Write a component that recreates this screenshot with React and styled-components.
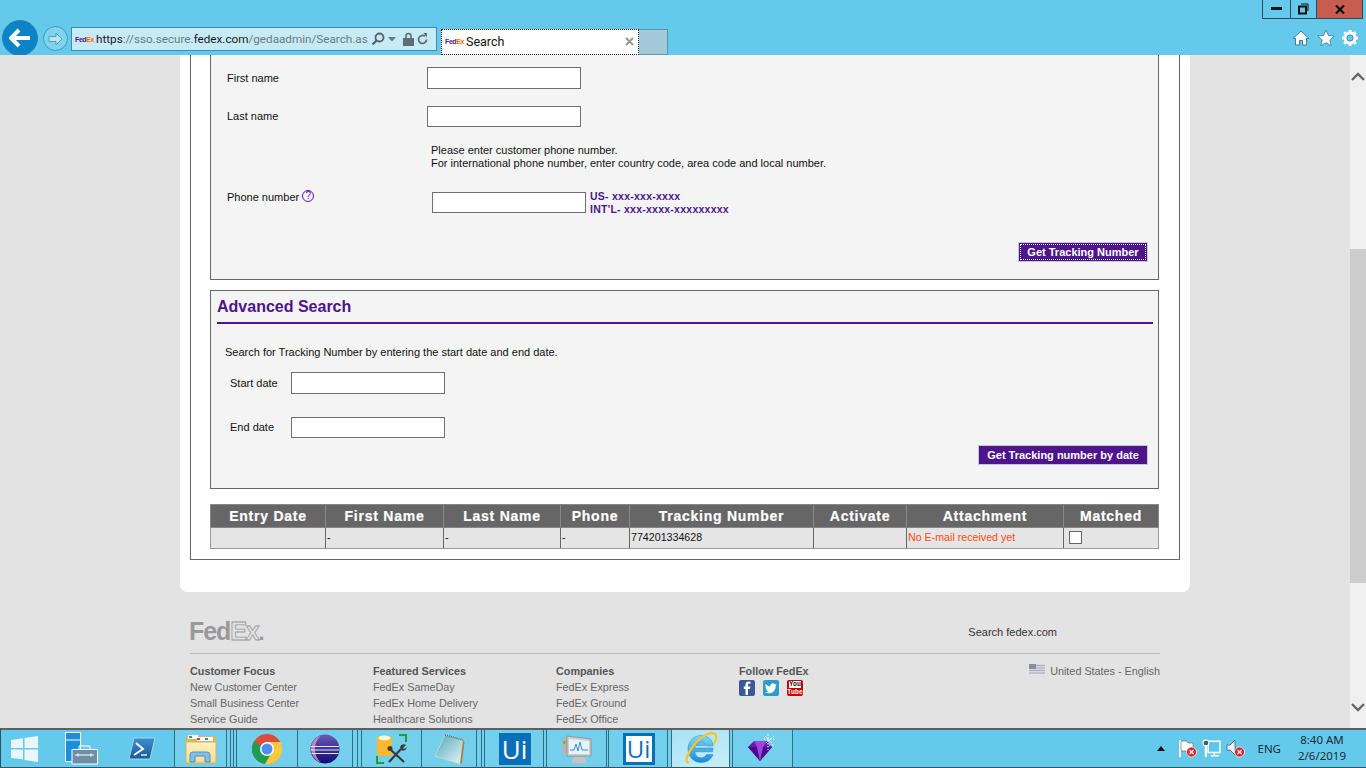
import React from 'react';
import styled, { createGlobalStyle } from 'styled-components';

const Global = createGlobalStyle`
  html, body { margin: 0; padding: 0; height: 100%; overflow: hidden; }
  * { box-sizing: border-box; }
  body { font-family: "Liberation Sans", Arial, sans-serif; font-size: 11px; color: #111; }
`;

const Screen = styled.div`
  width: 1366px;
  height: 768px;
  display: flex;
  flex-direction: column;
  overflow: hidden;
  background: #e3e3e3;
`;

const Glyph = styled.span`
  display: flex;
  flex: none;
  margin-left: ${p => p.$ml || 0}px;
  margin-right: ${p => p.$mr || 0}px;
`;

/* browser chrome */
const Chrome = styled.div`
  height: 55px;
  flex: none;
  background: #65c9ec;
  display: flex;
  flex-direction: column;
`;
const WindowBar = styled.div`
  height: 20px;
  display: flex;
  justify-content: flex-end;
  padding-right: 3px;
`;
const WinBtn = styled.div`
  width: ${p => p.$w}px;
  height: 19px;
  border: 1px solid #2c4a5c;
  border-top: none;
  margin-left: -1px;
  background: ${p => p.$bg || 'transparent'};
  display: flex;
  align-items: center;
  justify-content: center;
`;
const NavBar = styled.div`
  height: 35px;
  display: flex;
  align-items: flex-end;
  padding-left: 2px;
`;
const BackBtn = styled.div`
  width: 36px;
  height: 36px;
  margin-bottom: -1px;
  border-radius: 50%;
  background: #0a84c6;
  border: 1px solid #2a7fb0;
  display: flex;
  align-items: center;
  justify-content: center;
  flex: none;
`;
const ForwardBtn = styled.div`
  width: 25px;
  height: 25px;
  margin: 0 0 4px 5px;
  border-radius: 50%;
  background: #7fd3ee;
  border: 1px solid #3f9dbd;
  display: flex;
  align-items: center;
  justify-content: center;
  flex: none;
`;
const Address = styled.div`
  width: 366px;
  height: 24px;
  margin: 0 0 4px 3px;
  background: #c6ebf7;
  border: 1px solid #3d8fae;
  display: flex;
  align-items: center;
  padding-left: 3px;
  flex: none;
`;
const Favicon = styled.span`
  font: bold 7px "Liberation Sans", sans-serif;
  letter-spacing: -0.4px;
  color: #4d148c;
  width: 21px;
  flex: none;
  b { color: #ff6600; font-weight: bold; }
`;
const Url = styled.span`
  font: 11.7px Roboto, "Noto Sans", sans-serif;
  color: #6a7a80;
  width: 272px;
  white-space: nowrap;
  flex: none;
  b { color: #1a1a1a; font-weight: normal; }
`;
const AddrIcons = styled.div`
  display: flex;
  align-items: center;
  gap: 3px;
  margin-left: 3px;
`;
const Tab = styled.div`
  width: 198px;
  height: 26px;
  margin-left: 4px;
  background: #fff;
  border: 1px dotted #222;
  display: flex;
  align-items: center;
  padding: 0 4px 2px 3px;
  flex: none;
`;
const TabTitle = styled.span`
  font: 12.5px Roboto, "Noto Sans", sans-serif;
  color: #111;
  flex: 1;
`;
const NewTab = styled.div`
  width: 29px;
  height: 26px;
  background: #a3c8d8;
  border: 1px solid #4f9ab6;
  border-left: none;
  flex: none;
`;
const ToolIcons = styled.div`
  margin-left: auto;
  display: flex;
  align-items: center;
  gap: 6.5px;
  padding: 0 7px 8px 0;
`;

/* middle */
const Middle = styled.div`
  flex: 1;
  min-height: 0;
  display: flex;
`;
const Viewport = styled.div`
  flex: 1;
  overflow: hidden;
  background: #e3e3e3;
`;
const Card = styled.div`
  width: 1010px;
  margin-left: 180px;
  padding: 0 10px 32px;
  background: #fff;
  border-radius: 0 0 8px 8px;
`;
const Outer = styled.div`
  border: 1px solid #666;
  border-top: none;
  padding: 0 20px 10px 19px;
`;
const Panel = styled.div`
  background: #f4f4f4;
  border: 1px solid #666;
  border-top: ${p => (p.$open ? 'none' : '1px solid #666')};
  margin-top: ${p => p.$mt || 0}px;
  height: ${p => p.$h}px;
  padding-top: ${p => p.$pt || 0}px;
`;
const Row = styled.div`
  display: flex;
  align-items: ${p => p.$top ? 'flex-start' : 'center'};
  margin-top: ${p => p.$mt || 0}px;
  padding-left: ${p => p.$pl || 0}px;
`;
const Label = styled.label`
  width: ${p => p.$w}px;
  flex: none;
  font-size: 11px;
  color: #111;
  margin-top: ${p => p.$mt || 0}px;
  padding-bottom: ${p => p.$pb || 0}px;
`;
const HelpMark = styled.span`
  display: inline-flex;
  width: 12px;
  height: 12px;
  margin-left: 3px;
  border: 1px solid #6a0dad;
  border-radius: 50%;
  color: #6a0dad;
  font-size: 10px;
  line-height: 10px;
  justify-content: center;
  position: relative;
  top: -2px;
`;
const Field = styled.input`
  width: 154px;
  height: ${p => p.$h || 21}px;
  background: #fff;
  border: 1px solid #707070;
  border-radius: 0;
  padding: 0;
  flex: none;
`;
const Help = styled.p`
  margin: 17px 0 0 220px;
  font-size: 11px;
  line-height: 13px;
  color: #111;
`;
const Formats = styled.div`
  margin: -2px 0 0 4px;
  font-size: 10.5px;
  font-weight: bold;
  line-height: 13px;
  letter-spacing: 0.25px;
  color: #4d148c;
`;
const ButtonRow = styled.div`
  display: flex;
  justify-content: flex-end;
  padding-right: 10px;
  margin-top: ${p => p.$mt}px;
`;
const PurpleBtn = styled.button`
  width: ${p => p.$w}px;
  height: ${p => p.$h}px;
  background: #4d148c;
  color: #fff;
  font: bold 11px "Liberation Sans", sans-serif;
  border: 1px solid #c9c6d2;
  outline: ${p => p.$focus ? '1px dotted #fff' : 'none'};
  outline-offset: -3px;
  padding: 0;
  flex: none;
`;
const Heading = styled.h2`
  margin: 0 5px 0 6px;
  height: 33px;
  padding-top: 7px;
  border-bottom: 2px solid #4d148c;
  color: #4d148c;
  font-size: 16px;
  line-height: 18px;
  font-weight: bold;
`;
const Intro = styled.p`
  margin: 22px 0 0 14px;
  font-size: 11px;
  line-height: 13px;
`;

const Results = styled.table`
  width: 948px;
  margin-top: 15px;
  border-collapse: collapse;
  table-layout: fixed;
`;
const Th = styled.th`
  height: 23px;
  padding: 0;
  background: #666;
  color: #fff;
  border: 1px solid #888;
  font: bold 14px "Liberation Sans", sans-serif;
  letter-spacing: 0.75px;
  -webkit-text-stroke: 0.2px #fff;
  text-align: center;
`;
const Td = styled.td`
  height: 21px;
  padding: 0 0 2px 1px;
  background: #e5e5e5;
  border: 1px solid #666;
  border-bottom-color: #999;
  font-size: 10.67px;
  color: ${p => p.$warn ? '#ff4a0d' : '#111'};
  &:first-child { border-left-color: #999; }
  &:last-child { border-right-color: #999; }
`;
const Check = styled.span`
  display: block;
  width: 13px;
  height: 13px;
  margin: 1px 0 0 4px;
  background: #fff;
  border: 1px solid #666;
`;

/* footer */
const Footer = styled.div`
  width: 970px;
  margin-left: 190px;
  padding-top: 27px;
`;
const FooterTop = styled.div`
  height: 35px;
  display: flex;
  justify-content: space-between;
  border-bottom: 1px solid #bbb;
  padding-right: 103px;
`;
const Logo = styled.div`
  font: bold 25px/25px "Liberation Sans", sans-serif;
  letter-spacing: -1.1px;
  margin-left: -1px;
  color: #999;
  height: 25px;
  span {
    color: #e3e3e3;
    -webkit-text-stroke: 0.8px #999;
  }
  i { font-style: normal; font-size: 22px; letter-spacing: 0; }
`;
const SearchLink = styled.div`
  font-size: 11px;
  color: #333;
  line-height: 26px;
`;
const FooterCols = styled.div`
  display: flex;
  padding-top: 9px;
`;
const Col = styled.div`
  width: 183px;
  flex: none;
  font-size: 10.8px;
  line-height: 16px;
  color: #666;
  strong { display: block; color: #555; }
`;
const Socials = styled.div`
  display: flex;
  gap: 8px;
  margin-top: 1px;
`;
const Locale = styled.div`
  margin-left: auto;
  display: flex;
  align-items: flex-start;
  gap: 5px;
  font-size: 10.8px;
  line-height: 16px;
  color: #666;
  white-space: nowrap;
`;

/* scrollbar */
const Scroll = styled.div`
  width: 16px;
  flex: none;
  background: #f0f0f0;
  display: flex;
  flex-direction: column;
`;
const ScrollEnd = styled.div`
  height: 42px;
  margin-top: ${p => p.$bottom ? 'auto' : '0'};
  display: flex;
  align-items: center;
  justify-content: center;
`;
const Thumb = styled.div`
  height: 334px;
  margin-top: 152px;
  background: #cdcdcd;
`;

/* taskbar */
const Taskbar = styled.div`
  height: 40px;
  flex: none;
  background: #65c9ec;
  border-top: 2px solid #5f5f5f;
  border-bottom: 1px solid #33525f;
  border-left: 1px solid #33525f;
  display: flex;
`;
const StartGroup = styled.div`
  width: 174px;
  flex: none;
  display: flex;
  align-items: center;
  border-right: 1px solid #2c6f88;
`;
const Task = styled.div`
  width: ${p => p.$w}px;
  flex: none;
  background: ${p => p.$active ? 'linear-gradient(160deg,#a8e2f4,#c8eef8)' : '#74cfec'};
  border-right: 1px solid #2c6f88;
  display: flex;
  align-items: center;
  justify-content: center;
`;
const UiSolid = styled.div`
  width: 32px;
  height: 32px;
  margin-left: 1px;
  background: #0b6fb8;
  color: #fff;
  font: 26px/32px "Open Sans", "Liberation Sans", sans-serif;
  text-align: center;
`;
const UiFramed = styled(UiSolid)`
  background: #fff;
  color: #0b6fb8;
  border: 3px solid #0b6fb8;
  line-height: 26px;
  font-size: 24px;
`;
const Tray = styled.div`
  margin-left: auto;
  display: flex;
  align-items: center;
  color: #1c2b33;
`;
const Eng = styled.span`
  font: 11.5px "Noto Sans", "Open Sans", sans-serif;
  margin: 0 10px 0 12px;
`;
const Clock = styled.div`
  width: 62px;
  margin: -2px 13px 0 0;
  text-align: center;
  font: 11.5px/16px "Noto Sans", "Open Sans", sans-serif;
`;

const Chevron = ({ up }) => (
  <svg width="14" height="9" viewBox="0 0 14 9">
    <path d={up ? 'M1 8l6-6 6 6' : 'M1 1l6 6 6-6'} fill="none" stroke="#666" strokeWidth="2.4" />
  </svg>
);

const Home = () => (
  <svg width="18" height="18" viewBox="0 0 18 18">
    <path d="M9 2L1 9.5h2.5V16h4v-4.5h3V16h4V9.5H17z" fill="#fff" stroke="#3e7f98" strokeWidth="1" />
  </svg>
);
const Star = () => (
  <svg width="18" height="18" viewBox="0 0 18 18">
    <path d="M9 1l2.4 5.4 5.8.6-4.4 3.9 1.3 5.7L9 13.7l-5.1 2.9 1.3-5.7L.8 7l5.8-.6z" fill="#fff" stroke="#3e7f98" strokeWidth=".8" />
  </svg>
);
const Gear = () => (
  <svg width="18" height="18" viewBox="0 0 18 18">
    <circle cx="9" cy="9" r="5" fill="none" stroke="#fff" strokeWidth="3" />
    <path d="M9 1v3M9 14v3M1 9h3M14 9h3M3.3 3.3l2 2M12.7 12.7l2 2M14.7 3.3l-2 2M5.3 12.7l-2 2" stroke="#fff" strokeWidth="3" />
    <circle cx="9" cy="9" r="3" fill="#65c9ec" stroke="#3e7f98" strokeWidth=".7" />
  </svg>
);

const WindowsLogo = () => (
  <svg width="28" height="28" viewBox="0 0 28 28">
    <path d="M0 5l12-1.7V13H0zM13.500 3L27 1v12H13.500zM0 14.500h12v10L0 22.800zM13.500 14.500H27V27l-13.500-2z" fill="#e9f6fb" />
  </svg>
);
const ServerManager = () => (
  <svg width="33" height="33" viewBox="0 0 33 33">
    <path d="M.5.5h15v29H.5z" fill="#1c8fdc" stroke="#fff" />
    <path d="M.5 8h15" stroke="#fff" />
    <path d="M7 17.500h25.500v14.500H7z" fill="#6f8ea3" stroke="#fff" />
    <path d="M14 17v-3h11v3" fill="none" stroke="#fff" />
    <path d="M10 23h19" stroke="#fff" />
    <path d="M13 21.500v3M26 21.500v3" stroke="#fff" />
  </svg>
);
const PowerShell = () => (
  <svg width="28" height="24" viewBox="0 0 28 24">
    <defs>
      <linearGradient id="ps" x1="0" y1="0" x2="0" y2="1">
        <stop offset="0" stopColor="#3f8fd0" />
        <stop offset="1" stopColor="#175a9c" />
      </linearGradient>
    </defs>
    <path d="M6 1h21l-5 21H1z" fill="url(#ps)" stroke="#a8d4ea" />
    <path d="M8 6l7 6-9 6" fill="none" stroke="#fff" strokeWidth="2" />
    <path d="M13 18h6" stroke="#cfe6f4" strokeWidth="1.600" />
  </svg>
);
const Explorer = () => (
  <svg width="32" height="30" viewBox="0 0 32 30">
    <defs>
      <linearGradient id="fold" x1="0" y1="0" x2="0" y2="1">
        <stop offset="0" stopColor="#fff3bf" />
        <stop offset="1" stopColor="#f3d98a" />
      </linearGradient>
    </defs>
    <path d="M1 2h30v26H1z" fill="#d9b75e" />
    <path d="M3 1h10v4H3z" fill="#fff" />
    <path d="M4 2h3v2H4z" fill="#2ba84a" />
    <path d="M12 3h16v4H12z" fill="#fff" />
    <path d="M12 4h3v2h-3z" fill="#d8402c" />
    <path d="M20 4h3v2h-3z" fill="#2f80d0" />
    <path d="M1 8h30v21H1z" fill="url(#fold)" stroke="#d2b264" />
    <path d="M5 28v-7a3 3 0 0 1 3-3h14a3 3 0 0 1 3 3v7h-5v-6h-10v6z" fill="#7dc0e8" stroke="#4a94c4" />
  </svg>
);
const ChromeIcon = () => (
  <svg width="30" height="30" viewBox="0 0 30 30">
    <circle cx="15" cy="15" r="15" fill="#dd4b3e" />
    <path d="M15 15L2 7.500A15 15 0 0 0 15 30l7-11z" fill="#1d9d55" />
    <path d="M15 8h13.500A15 15 0 0 1 13 29.900L21 16z" fill="#f8c93e" />
    <circle cx="15" cy="15" r="7" fill="#fff" />
    <circle cx="15" cy="15" r="5.500" fill="#4d8cf0" />
  </svg>
);
const Eclipse = () => (
  <svg width="30" height="30" viewBox="0 0 30 30">
    <defs>
      <linearGradient id="ecl" x1="0" y1="0" x2="0" y2="1">
        <stop offset="0" stopColor="#6a5ab8" />
        <stop offset="1" stopColor="#0d0d6e" />
      </linearGradient>
    </defs>
    <circle cx="15" cy="15" r="14.500" fill="url(#ecl)" />
    <path d="M1 15A14 14 0 0 1 11 1.500 18 18 0 0 0 11 28.500 14 14 0 0 1 1 15z" fill="#e9a5d6" opacity=".7" />
    <path d="M1 12.500h28M.8 16h28.400M1.500 19.500h27" stroke="#e4e4f6" strokeWidth="1.100" />
  </svg>
);
const DbTool = () => (
  <svg width="32" height="32" viewBox="0 0 32 32">
    <path d="M1 5c0-3 15-3 15 0v16c0 3-15 3-15 0z" fill="#fbb72e" />
    <ellipse cx="8.500" cy="5" rx="6" ry="2.500" fill="#fff6dc" />
    <path d="M23 2h7v7M8 30H1v-7" fill="none" stroke="#2d9a3a" strokeWidth="2" />
    <path d="M13 29L25 16M15 17l13 12" stroke="#3a3a3a" strokeWidth="2.200" />
    <path d="M24 14a4 4 0 0 1 6-2l-3 3 1 1 3-2a4 4 0 0 1-6 3z" fill="#3a3a3a" />
    <circle cx="14" cy="15.500" r="2.500" fill="#3a3a3a" />
  </svg>
);
const Notepad = () => (
  <svg width="32" height="32" viewBox="0 0 32 32">
    <defs>
      <linearGradient id="note" x1="0" y1="0" x2="1" y2="1">
        <stop offset="0" stopColor="#4fa8bc" />
        <stop offset="1" stopColor="#e6f5f5" />
      </linearGradient>
    </defs>
    <path d="M12 2l18 5-3 24-25-8z" fill="url(#note)" stroke="#cfd8d8" strokeWidth=".8" />
    <path d="M27 31l3-24 1.500 2-2.500 21z" fill="#a88448" />
    <path d="M12 2l18 5" stroke="#556" strokeWidth="1.600" strokeDasharray="1 1" />
  </svg>
);
const PerfMon = () => (
  <svg width="32" height="32" viewBox="0 0 32 32">
    <path d="M1 6l5-2v16l-5 2z" fill="#b5b5b5" />
    <path d="M2.500 8h2v3h-2z" fill="#59b548" />
    <path d="M6 3l24 3v17H6z" fill="#cfcfcf" stroke="#8a8a8a" strokeWidth=".8" />
    <path d="M8 6l20 2v13H8z" fill="#e6f3fa" />
    <path d="M9 17h4l2-6 2 7 2-9 2 8h6" fill="none" stroke="#3d8ccc" strokeWidth="1" />
    <path d="M13 24h10l3 5c-4 2-12 2-16 0z" fill="#c4c4c4" />
  </svg>
);
const IeIcon = () => (
  <svg width="34" height="34" viewBox="0 0 34 34">
    <defs>
      <linearGradient id="ieb" x1="0" y1="0" x2="0" y2="1">
        <stop offset="0" stopColor="#7fd8f6" />
        <stop offset="1" stopColor="#1a8bd8" />
      </linearGradient>
    </defs>
    <path d="M28 16H11c0-4 2.500-7 6-7s6 3 6 5h6C29 8 24 3.500 17 3.500 9.500 3.500 4 9.500 4 17s5.500 13.500 13 13.500c6 0 10.500-3 12-8h-6.500c-1 2-3 3.300-5.500 3.300-3.500 0-6-3-6-6h17.500c.4-1.500.4-2.500.5-3.800zM12 13.500c.5-2 2.500-3.500 5-3.500s4.500 1.500 5 3.500z" fill="url(#ieb)" stroke="#2b86c5" strokeWidth=".5" fillRule="evenodd" />
    <path d="M5 30C0 32 3 22 10 13S27 -1 31 2c2 1.500 1 6-1 10" fill="none" stroke="#f4c62c" strokeWidth="2.300" />
  </svg>
);
const Gem = () => (
  <svg width="32" height="32" viewBox="0 0 32 32">
    <path d="M1 14l6-6h13l5 6-12 14z" fill="#6a1cb0" />
    <path d="M1 14h24L13 28z" fill="#4b0c8c" />
    <path d="M7 8l3 6 3 14 3-14 4-6z" fill="#a044e0" />
    <path d="M21 1v16M17 6h12M18 3l7 7M19 10l8-7M22 12h6" stroke="#fff" strokeWidth="1" strokeDasharray="1.500 1.500" />
  </svg>
);

const ErrBadge = () => (
  <g>
    <circle cx="13.500" cy="13" r="5" fill="#d9252b" stroke="#fff" strokeWidth=".7" />
    <path d="M11.500 11l4 4M15.500 11l-4 4" stroke="#fff" strokeWidth="1.300" />
  </g>
);

const Flag = () => (
  <svg width="19" height="19" viewBox="0 0 19 19">
    <path d="M2 1v17" stroke="#fff" strokeWidth="2" />
    <path d="M3 2h6l1 2h5v8H3z" fill="#fff" stroke="#46606c" strokeWidth=".6" />
    <ErrBadge />
  </svg>
);
const Network = () => (
  <svg width="19" height="19" viewBox="0 0 17 17">
    <path d="M5.500 2h10.500v10H5.500z" fill="#5fc6ea" stroke="#fff" strokeWidth="1.300" />
    <path d="M8 15h7M11 12v3" stroke="#fff" strokeWidth="1.300" />
    <rect x="1" y="1" width="5" height="5" rx="2" fill="#46606c" stroke="#fff" />
    <path d="M3.500 6v10" stroke="#fff" strokeWidth="2" />
  </svg>
);
const Speaker = () => (
  <svg width="19" height="19" viewBox="0 0 19 19">
    <path d="M1 6h3l5-5v15l-5-5H1z" fill="#e8f4f8" stroke="#46606c" strokeWidth=".8" />
    <ErrBadge />
  </svg>
);

const Fb = () => (
  <svg width="16" height="16" viewBox="0 0 16 16">
    <rect width="16" height="16" rx="2" fill="#3b5998" />
    <path d="M9 15V9h2l.4-2.500H9V5c0-.8.300-1.200 1.200-1.200h1.300V1.500H9.800C7.700 1.500 6.500 2.700 6.500 4.800v1.700H4.800V9h1.700v6z" fill="#fff" />
  </svg>
);
const Tw = () => (
  <svg width="16" height="16" viewBox="0 0 16 16">
    <rect width="16" height="16" rx="2" fill="#2a9ccd" />
    <path d="M13.500 4.500c-.5.200-1 .4-1.500.4.500-.3 1-.8 1.100-1.300-.5.300-1 .5-1.600.6a2.500 2.500 0 0 0-4.300 2.300C5.600 6.400 3.900 5.500 2.700 4c-.7 1.200-.3 2.600.8 3.300-.4 0-.8-.100-1.100-.3 0 1.200.8 2.200 2 2.500-.4.100-.8.100-1.100 0 .3 1 1.300 1.700 2.300 1.700-1 .8-2.300 1.200-3.600 1 4.500 2.700 11-.1 10.600-6.300.5-.4.900-.8 1-1.400z" fill="#fff" />
  </svg>
);
const YtBadge = styled.div`
  width: 16px;
  height: 16px;
  border-radius: 2px;
  background: #c00;
  color: #fff;
  font: bold 6.500px/7px "Liberation Mono", monospace;
  text-align: center;
  padding-top: 1px;
  span { display: block; background: #fff; color: #111; margin: 0 2px 1px; }
`;
const FlagUs = styled.svg`
  width: 16px;
  height: 10px;
  margin-top: 1px;
  flex: none;
`;

const columns = [
  ['Entry Date', 115], ['First Name', 118], ['Last Name', 117], ['Phone', 69],
  ['Tracking Number', 184], ['Activate', 93], ['Attachment', 157], ['Matched', 95],
];

const footerCols = [
  ['Customer Focus', 'New Customer Center', 'Small Business Center', 'Service Guide'],
  ['Featured Services', 'FedEx SameDay', 'FedEx Home Delivery', 'Healthcare Solutions'],
  ['Companies', 'FedEx Express', 'FedEx Ground', 'FedEx Office'],
];

export default function App() {
  return (
    <Screen>
      <Global />
      <Chrome>
        <WindowBar>
          <WinBtn $w={29}>
            <svg width="11" height="4"><rect width="11" height="3" fill="#111" /></svg>
          </WinBtn>
          <WinBtn $w={27}>
            <svg width="11" height="12" viewBox="0 0 11 12">
              <path d="M3 1h7v7" fill="none" stroke="#111" />
              <rect x="1" y="3.500" width="7" height="7" fill="none" stroke="#111" strokeWidth="2" />
            </svg>
          </WinBtn>
          <WinBtn $w={47} $bg="#c75c50">
            <svg width="10" height="9" viewBox="0 0 10 9">
              <path d="M1 .5l8 8M9 .5l-8 8" stroke="#111" strokeWidth="2.200" />
            </svg>
          </WinBtn>
        </WindowBar>
        <NavBar>
          <BackBtn>
            <svg width="22" height="20" viewBox="0 0 22 20">
              <path d="M10 2L2 10l8 8M2 10h19" fill="none" stroke="#fff" strokeWidth="4" />
            </svg>
          </BackBtn>
          <ForwardBtn>
            <svg width="15" height="14" viewBox="0 0 15 14">
              <path d="M8 1l6 6-6 6V9.500H1v-5h7z" fill="#b8e4f2" stroke="#5b9db6" />
            </svg>
          </ForwardBtn>
          <Address>
            <Favicon>Fed<b>Ex</b></Favicon>
            <Url><b>https</b>://sso.secure.<b>fedex.com</b>/gedaadmin/Search.as</Url>
            <AddrIcons>
              <svg width="14" height="14" viewBox="0 0 14 14">
                <circle cx="8.500" cy="5.500" r="4" fill="none" stroke="#50626a" strokeWidth="1.800" />
                <path d="M5.500 8.500L1.500 12.500" stroke="#50626a" strokeWidth="2.200" />
              </svg>
              <svg width="8" height="5" viewBox="0 0 8 5"><path d="M0 0h8L4 4.500z" fill="#6a7a80" /></svg>
              <Glyph $ml={4}>
                <svg width="11" height="14" viewBox="0 0 11 14">
                  <path d="M3 6V4a2.500 2.500 0 0 1 5 0v2" fill="none" stroke="#5e6d74" strokeWidth="1.600" />
                  <rect y="6" width="11" height="8" fill="#5e6d74" />
                </svg>
              </Glyph>
              <svg width="11" height="14" viewBox="0 0 11 14">
                <path d="M9.500 7.500a4 4 0 1 1-1.500-3.200" fill="none" stroke="#5e6d74" strokeWidth="1.800" />
                <path d="M6.500 1L10 1v4.500z" fill="#5e6d74" />
              </svg>
            </AddrIcons>
          </Address>
          <Tab>
            <Favicon>Fed<b>Ex</b></Favicon>
            <TabTitle>Search</TabTitle>
            <svg width="9" height="9" viewBox="0 0 9 9">
              <path d="M1 1l7 7M8 1L1 8" stroke="#999" strokeWidth="2" />
            </svg>
          </Tab>
          <NewTab />
          <ToolIcons>
            <Home />
            <Star />
            <Gear />
          </ToolIcons>
        </NavBar>
      </Chrome>

      <Middle>
        <Viewport>
          <Card>
            <Outer>
              <Panel $open $h={225} $pt={12}>
                <Row $pl={16}>
                  <Label $w={200}>First name</Label>
                  <Field $h={22} />
                </Row>
                <Row $pl={16} $mt={17}>
                  <Label $w={200} $pb={2}>Last name</Label>
                  <Field />
                </Row>
                <Help>
                  Please enter customer phone number.<br />
                  For international phone number, enter country code, area code and local number.
                </Help>
                <Row $pl={16} $mt={22} $top>
                  <Label $w={205} $mt={-1}>Phone number<HelpMark>?</HelpMark></Label>
                  <Field />
                  <Formats>US- xxx-xxx-xxxx<br />INT'L- xxx-xxxx-xxxxxxxxx</Formats>
                </Row>
                <ButtonRow $mt={26}>
                  <PurpleBtn $w={130} $h={20} $focus>Get Tracking Number</PurpleBtn>
                </ButtonRow>
              </Panel>

              <Panel $mt={10} $h={199}>
                <Heading>Advanced Search</Heading>
                <Intro>Search for Tracking Number by entering the start date and end date.</Intro>
                <Row $pl={19} $mt={13}>
                  <Label $w={61}>Start date</Label>
                  <Field $h={22} />
                </Row>
                <Row $pl={19} $mt={23}>
                  <Label $w={61} $pb={2}>End date</Label>
                  <Field />
                </Row>
                <ButtonRow $mt={7}>
                  <PurpleBtn $w={170} $h={20}>Get Tracking number by date</PurpleBtn>
                </ButtonRow>
              </Panel>

              <Results>
                <colgroup>
                  {columns.map(([name, w]) => <col key={name} width={w} />)}
                </colgroup>
                <thead>
                  <tr>{columns.map(([name]) => <Th key={name}>{name}</Th>)}</tr>
                </thead>
                <tbody>
                  <tr>
                    <Td />
                    <Td>-</Td>
                    <Td>-</Td>
                    <Td>-</Td>
                    <Td>774201334628</Td>
                    <Td />
                    <Td $warn>No E-mail received yet</Td>
                    <Td><Check /></Td>
                  </tr>
                </tbody>
              </Results>
            </Outer>
          </Card>

          <Footer>
            <FooterTop>
              <Logo>Fed<span>Ex</span><i>.</i></Logo>
              <SearchLink>Search fedex.com</SearchLink>
            </FooterTop>
            <FooterCols>
              {footerCols.map(col => (
                <Col key={col[0]}>
                  <strong>{col[0]}</strong>
                  {col.slice(1).map(item => <div key={item}>{item}</div>)}
                </Col>
              ))}
              <Col>
                <strong>Follow FedEx</strong>
                <Socials>
                  <Fb />
                  <Tw />
                  <YtBadge><span>You</span>Tube</YtBadge>
                </Socials>
              </Col>
              <Locale>
                <FlagUs viewBox="0 0 16 10">
                  <rect width="16" height="10" fill="#d8d8e0" />
                  <path d="M0 1.500h16M0 4h16M0 6.500h16M0 9h16" stroke="#a9a9b8" />
                  <rect width="7" height="5" fill="#8a8aa8" />
                </FlagUs>
                United States - English
              </Locale>
            </FooterCols>
          </Footer>
        </Viewport>
        <Scroll>
          <ScrollEnd><Chevron up /></ScrollEnd>
          <Thumb />
          <ScrollEnd $bottom><Chevron /></ScrollEnd>
        </Scroll>
      </Middle>

      <Taskbar>
        <StartGroup>
          <Glyph $ml={10}><WindowsLogo /></Glyph>
          <Glyph $ml={26}><ServerManager /></Glyph>
          <Glyph $ml={30}><PowerShell /></Glyph>
        </StartGroup>
        <Task $w={52}><Explorer /></Task>
        <Task $w={4} />
        <Task $w={3} />
        <Task $w={3} />
        <Task $w={61}><ChromeIcon /></Task>
        <Task $w={55}><Eclipse /></Task>
        <Task $w={5} />
        <Task $w={4} />
        <Task $w={60}><DbTool /></Task>
        <Task $w={55}><Notepad /></Task>
        <Task $w={5} />
        <Task $w={3} />
        <Task $w={59}><UiSolid>Ui</UiSolid></Task>
        <Task $w={3} />
        <Task $w={60}><PerfMon /></Task>
        <Task $w={2} />
        <Task $w={59}><UiFramed>Ui</UiFramed></Task>
        <Task $w={4} />
        <Task $w={58} $active><IeIcon /></Task>
        <Task $w={3} />
        <Task $w={60}><Gem /></Task>
        <Tray>
          <Glyph $mr={13}>
            <svg width="8" height="5" viewBox="0 0 8 5"><path d="M0 5h8L4 0z" fill="#111" /></svg>
          </Glyph>
          <Glyph $mr={5}><Flag /></Glyph>
          <Glyph $mr={5}><Network /></Glyph>
          <Speaker />
          <Eng>ENG</Eng>
          <Clock>8:40 AM<br />2/6/2019</Clock>
        </Tray>
      </Taskbar>
    </Screen>
  );
}
